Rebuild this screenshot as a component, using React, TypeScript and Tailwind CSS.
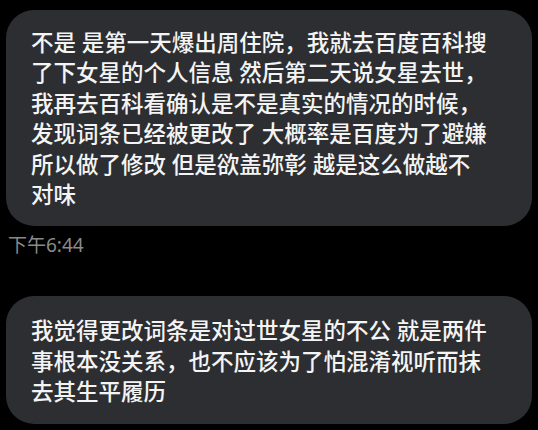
// Chat bubbles from a dark-theme messaging screen

const first = [
  '不是 是第一天爆出周住院，我就去百度百科搜',
  '了下女星的个人信息 然后第二天说女星去世，',
  '我再去百科看确认是不是真实的情况的时候，',
  '发现词条已经被更改了 大概率是百度为了避嫌',
  '所以做了修改 但是欲盖弥彰 越是这么做越不',
  '对味',
]

const second = [
  '我觉得更改词条是对过世女星的不公 就是两件',
  '事根本没关系，也不应该为了怕混淆视听而抹',
  '去其生平履历',
]

function Bubble({ lines, className = '' }: { lines: string[]; className?: string }) {
  return (
    <div className={`rounded-[28px] bg-[#2c2e31] pl-[25px] pb-[16px] text-[22.5px] font-medium leading-[30.4px] text-[#f4f4f4] ${className}`}>
      {lines.map((line, i) => (
        <div key={i} className="whitespace-nowrap">
          {line}
        </div>
      ))}
    </div>
  )
}

export default function App() {
  return (
    <div
      className="h-[430px] w-full overflow-hidden bg-black px-[6px] pt-[10px]"
      style={{ fontFamily: '"Noto Sans", "Noto Sans CJK SC", sans-serif' }}
    >
      <Bubble lines={first} className="pt-[18px]" />
      <div className="mt-[8px] pl-[2px] text-[19px] leading-[23px] text-[#8a8a8a]">下午6:44</div>
      <Bubble lines={second} className="mt-[39px] pt-[20px]" />
    </div>
  )
}
